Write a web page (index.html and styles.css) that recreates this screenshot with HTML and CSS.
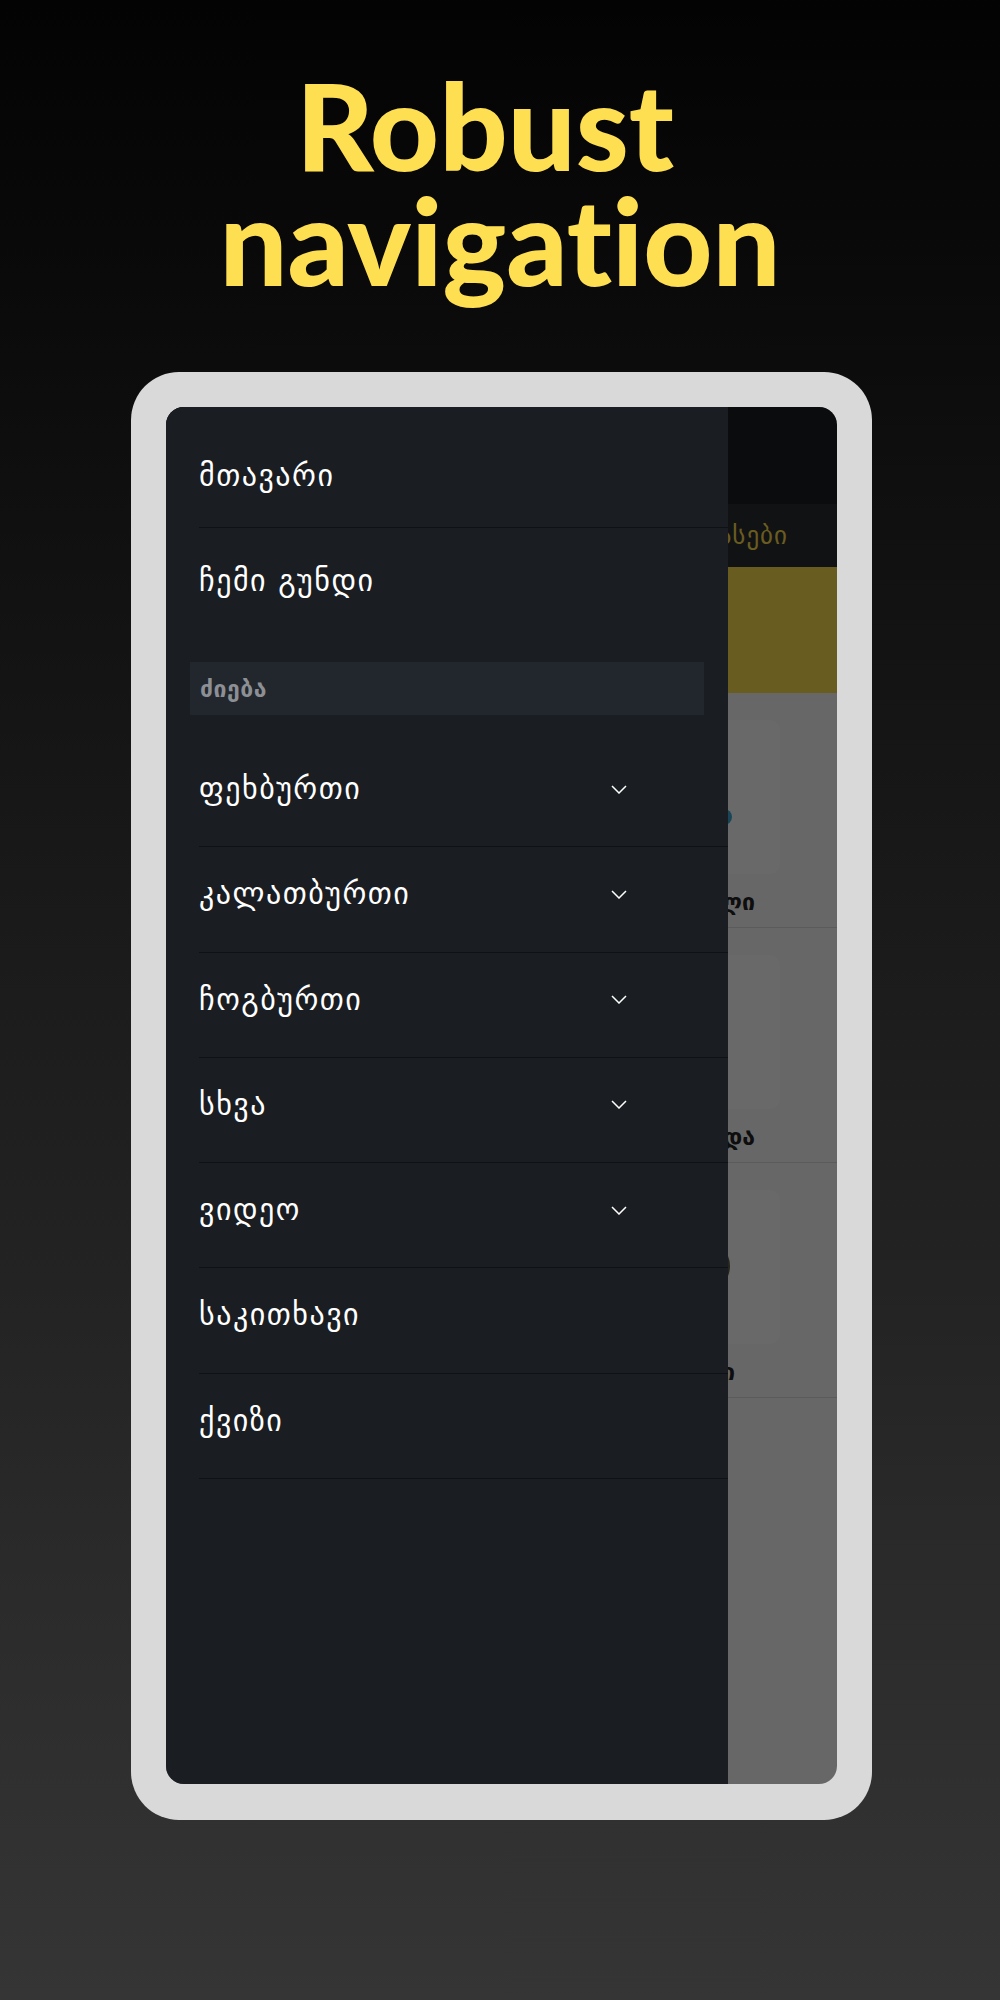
FILE: index.html
```html
<!DOCTYPE html>
<html lang="ka">
<head>
    <meta charset="UTF-8">
    <meta name="viewport" content="width=device-width, initial-scale=1.0">
    <title>Robust navigation</title>
    <link rel="stylesheet" href="styles.css">
</head>
<body>
    <h1 class="headline">
        <span class="line first-line">Robust</span>
        <span class="line">navigation</span>
    </h1>

    <div class="phone">
        <div class="screen">
            <!-- the app behind the open drawer -->
            <div class="app">
                <div class="app-bar"></div>
                <div class="tabs">
                    <span>ლიგები</span>
                    <span>თასები</span>
                </div>
                <div class="banner"></div>
                <div class="feed">
                    <div class="post">
                        <div class="thumb"><span class="dot"></span></div>
                        <div class="post-title">ჩემპიონთა ლიგის ფინალი</div>
                    </div>
                    <div class="post">
                        <div class="thumb"></div>
                        <div class="post-title">ტურნირი გაგრძელდა</div>
                    </div>
                    <div class="post">
                        <div class="thumb"><span class="logo"></span></div>
                        <div class="post-title short">კვირის საუკეთესო გოლები</div>
                    </div>
                </div>
            </div>

            <div class="scrim"></div>

            <nav class="drawer">
                <a class="nav-link divided">მთავარი</a>
                <a class="nav-link">ჩემი გუნდი</a>

                <div class="search">ძიება</div>

                <div class="menu">
                    <a class="nav-item">ფეხბურთი
                        <svg class="chevron" width="16" height="9" viewBox="0 0 16 9"><path d="M1 1l7 7 7-7"/></svg>
                    </a>
                    <a class="nav-item">კალათბურთი
                        <svg class="chevron" width="16" height="9" viewBox="0 0 16 9"><path d="M1 1l7 7 7-7"/></svg>
                    </a>
                    <a class="nav-item">ჩოგბურთი
                        <svg class="chevron" width="16" height="9" viewBox="0 0 16 9"><path d="M1 1l7 7 7-7"/></svg>
                    </a>
                    <a class="nav-item">სხვა
                        <svg class="chevron" width="16" height="9" viewBox="0 0 16 9"><path d="M1 1l7 7 7-7"/></svg>
                    </a>
                    <a class="nav-item">ვიდეო
                        <svg class="chevron" width="16" height="9" viewBox="0 0 16 9"><path d="M1 1l7 7 7-7"/></svg>
                    </a>
                    <a class="nav-item">საკითხავი</a>
                    <a class="nav-item">ქვიზი</a>
                </div>
            </nav>
        </div>
    </div>
</body>
</html>
```

FILE: styles.css
```css
/* page */
html, body {
    margin: 0;
    padding: 0;
}

body {
    min-height: 2000px;
    background: linear-gradient(#030303, #353535);
    font-family: "DejaVu Sans", sans-serif;
}

.headline {
    margin: 0;
    padding-top: 68px;
    font-family: Lato, sans-serif;
    font-weight: 900;
    font-size: 120px;
    line-height: 115px;
    font-variant-ligatures: none;
    color: #ffdf52;
    text-align: center;
}

.headline .line {
    display: block;
    height: 115px;
}

.headline .first-line {
    padding-right: 30px;
}

/* phone frame */
.phone {
    width: 741px;
    box-sizing: border-box;
    margin: 74px 0 0 131px;
    padding: 35px 35px 36px;
    background: #d9d9d9;
    border-radius: 48px;
}

.screen {
    position: relative;
    height: 1377px;
    border-radius: 18px;
    overflow: hidden;
    background: #f9f9f9;
}

/* app content under the drawer */
.app-bar {
    height: 97px;
    background: #1a1d21;
}

.tabs {
    height: 63px;
    display: flex;
    justify-content: flex-end;
    align-items: center;
    gap: 30px;
    padding-right: 49px;
    background: #2a2c30;
    color: #ffdf52;
    font-size: 25px;
    letter-spacing: 1px;
}

.banner {
    height: 126px;
    background: #ffdf52;
}

.post {
    padding-top: 27px;
    border-bottom: 1px solid #dcdcdc;
}

.thumb {
    position: relative;
    width: 300px;
    height: 154px;
    margin: 0 57px 0 auto;
    background: #fff;
    border-radius: 10px;
}

.dot {
    position: absolute;
    right: 48px;
    top: 89px;
    width: 16px;
    height: 16px;
    border-radius: 50%;
    background: #3aa9d6;
}

.logo {
    position: absolute;
    right: 50px;
    top: 50px;
    width: 52px;
    height: 52px;
    border-radius: 50%;
    background: #5e5c44;
}

.post-title {
    margin-top: 14px;
    padding: 0 82px 11px 0;
    line-height: 28px;
    text-align: right;
    font-size: 23px;
    font-weight: bold;
    color: #222;
    white-space: nowrap;
}

.post-title.short {
    padding-right: 102px;
}

.scrim {
    position: absolute;
    top: 0;
    left: 0;
    right: 0;
    bottom: 0;
    background: rgba(0, 0, 0, 0.59);
}

/* drawer */
.drawer {
    position: absolute;
    top: 0;
    left: 0;
    bottom: 0;
    width: 562px;
    box-sizing: border-box;
    padding-top: 16px;
    background: #1a1d21;
}

.nav-link {
    display: flex;
    align-items: center;
    height: 104px;
    margin-left: 33px;
    color: #fff;
    font-size: 30px;
    letter-spacing: 1.5px;
}

.nav-link.divided {
    border-bottom: 1px solid #0f1114;
}

.search {
    display: flex;
    align-items: center;
    height: 53px;
    margin: 30px 24px 0;
    padding-left: 10px;
    background: #22262d;
    color: #8c8f94;
    font-size: 23px;
    font-weight: bold;
    letter-spacing: 0.5px;
}

.menu {
    margin-top: 27px;
}

.nav-item {
    display: flex;
    justify-content: space-between;
    align-items: center;
    margin-left: 33px;
    padding: 32px 101px 42.3px 0;
    line-height: 30px;
    border-bottom: 1px solid #0f1114;
    color: #fff;
    font-size: 30px;
    letter-spacing: 1.5px;
}

.chevron path {
    fill: none;
    stroke: #fff;
    stroke-width: 1.5;
}
```
